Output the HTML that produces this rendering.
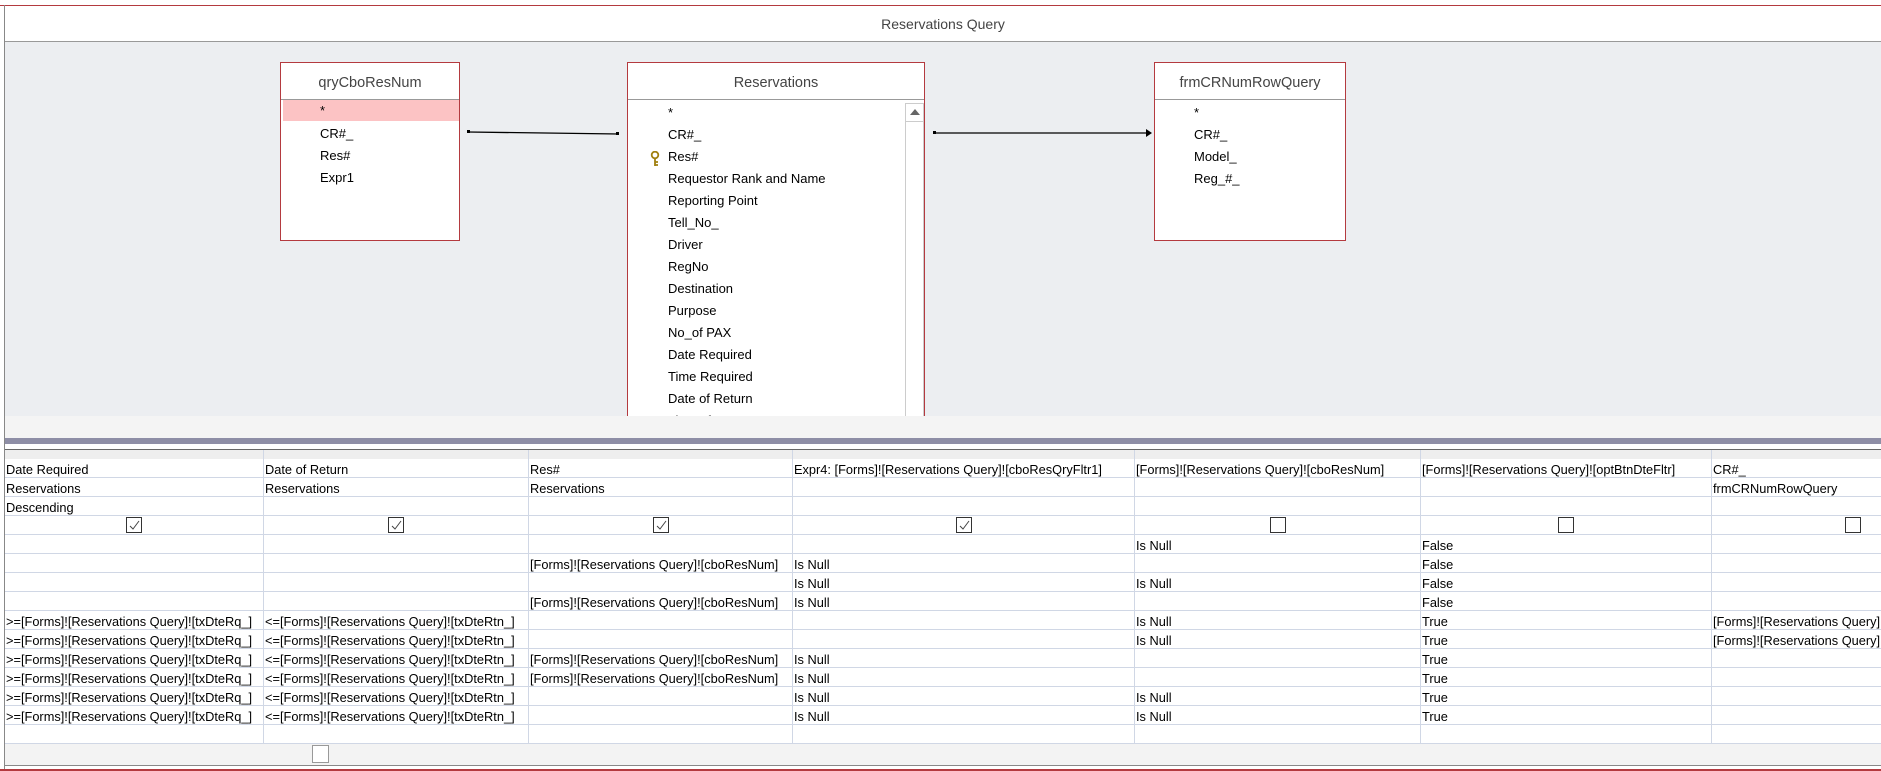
<!DOCTYPE html>
<html><head><style>
*{margin:0;padding:0;box-sizing:border-box}
body{width:1881px;height:771px;overflow:hidden;background:#fff;font-family:"Liberation Sans",sans-serif;font-size:13px;color:#000;position:relative}
.a{position:absolute}
.box{position:absolute;background:#fff;border:1px solid #b43a3f;overflow:hidden}
.box .t{position:absolute;left:0;right:0;top:0;height:37px;border-bottom:1px solid #999;text-align:center;line-height:40px;font-size:14.5px;color:#444}
.it{position:absolute;white-space:nowrap}
.c{position:absolute;white-space:nowrap;overflow:hidden;font-size:12.8px;line-height:19px;padding-left:1px;top:1px}
.cb{position:absolute;width:16px;height:16px;border:1px solid #333;background:#fff}
.cb svg{position:absolute;left:2px;top:2px}
</style></head><body>
<div class="a" style="left:0;top:5px;width:1881px;height:1px;background:#b43a3f"></div>
<div class="a" style="left:4px;top:5px;width:1px;height:766px;background:#888"></div>
<div class="a" style="left:5px;top:6px;width:1876px;height:36px;background:#fff;text-align:center;line-height:36px;font-size:14px;color:#444">Reservations Query</div>
<div class="a" style="left:5px;top:41px;width:1876px;height:1px;background:#999"></div>
<div class="a" style="left:5px;top:42px;width:1876px;height:374px;background:#eceef1"></div>
<div class="a" style="left:5px;top:416px;width:1876px;height:22px;background:#f4f4f4"></div>
<div class="a" style="left:5px;top:438px;width:1876px;height:6px;background:#8e8ea6"></div>
<div class="a" style="left:5px;top:449px;width:1876px;height:1px;background:#666"></div>
<div class="a" style="left:5px;top:450px;width:1876px;height:9px;background:#eee"></div>

<div class="box" style="left:280px;top:62px;width:180px;height:179px">
<div class="t">qryCboResNum</div>
<div class="a" style="left:2px;top:37px;width:176px;height:21px;background:#fcc3c4"></div>
<div class="it" style="left:39px;top:40px">*</div>
<div class="it" style="left:39px;top:63px">CR#_</div>
<div class="it" style="left:39px;top:85px">Res#</div>
<div class="it" style="left:39px;top:107px">Expr1</div>
</div>

<div class="box" style="left:627px;top:62px;width:298px;height:360px;border-bottom:none">
<div class="t">Reservations</div>
<div class="a" style="left:277px;top:40px;width:19px;height:330px;border:1px solid #ccc;background:#fff"></div>
<div class="a" style="left:277px;top:40px;width:19px;height:19px;border:1px solid #ccc"></div>
<div class="a" style="left:282px;top:46px;width:0;height:0;border-left:5px solid transparent;border-right:5px solid transparent;border-bottom:6px solid #666"></div>
<div class="it" style="left:40px;top:42px">*</div>
<div class="it" style="left:40px;top:64px">CR#_</div>
<svg class="a" style="left:22px;top:88px" width="10" height="16"><circle cx="5" cy="4" r="3.3" fill="none" stroke="#a08010" stroke-width="1.8"/><path d="M5 7v8M5 11h3M5 14h3" stroke="#a08010" stroke-width="1.8"/></svg>
<div class="it" style="left:40px;top:86px">Res#</div>
<div class="it" style="left:40px;top:108px">Requestor Rank and Name</div>
<div class="it" style="left:40px;top:130px">Reporting Point</div>
<div class="it" style="left:40px;top:152px">Tell_No_</div>
<div class="it" style="left:40px;top:174px">Driver</div>
<div class="it" style="left:40px;top:196px">RegNo</div>
<div class="it" style="left:40px;top:218px">Destination</div>
<div class="it" style="left:40px;top:240px">Purpose</div>
<div class="it" style="left:40px;top:262px">No_of PAX</div>
<div class="it" style="left:40px;top:284px">Date Required</div>
<div class="it" style="left:40px;top:306px">Time Required</div>
<div class="it" style="left:40px;top:328px">Date of Return</div>
<div class="it" style="left:40px;top:350px">Time of Return</div>
</div>
<div class="a" style="left:627px;top:416px;width:300px;height:22px;background:#f4f4f4"></div>

<div class="box" style="left:1154px;top:62px;width:192px;height:179px">
<div class="t">frmCRNumRowQuery</div>
<div class="it" style="left:39px;top:42px">*</div>
<div class="it" style="left:39px;top:64px">CR#_</div>
<div class="it" style="left:39px;top:86px">Model_</div>
<div class="it" style="left:39px;top:108px">Reg_#_</div>
</div>

<svg class="a" style="left:0;top:0" width="1881" height="300">
<path d="M468 132L619 134" stroke="#000" stroke-width="1.3"/>
<rect x="467" y="130" width="3" height="3" fill="#000"/><rect x="616" y="132" width="3" height="3" fill="#000"/>
<path d="M934 133L1148 133" stroke="#000" stroke-width="1.3"/>
<rect x="933" y="131" width="3" height="3" fill="#000"/>
<path d="M1146 129L1152 133L1146 137Z" fill="#000"/>
</svg>

<div id="g"></div>
<div class="a" style="left:5px;top:744px;width:1876px;height:21px;background:#f3f3f3"></div>
<div class="cb" style="left:312px;top:745px;width:17px;height:18px;border-color:#999"></div>
<div class="a" style="left:5px;top:765px;width:1876px;height:1px;background:#888"></div>
<div class="a" style="left:0;top:769px;width:1881px;height:2px;background:#b43a3f"></div>
<script>
var cols=[5,264,529,793,1135,1421,1712,1881];
var data=[
["Date Required","Date of Return","Res#","Expr4: [Forms]![Reservations Query]![cboResQryFltr1]","[Forms]![Reservations Query]![cboResNum]","[Forms]![Reservations Query]![optBtnDteFltr]","CR#_"],
["Reservations","Reservations","Reservations","","","","frmCRNumRowQuery"],
["Descending","","","","","",""],
["#1","#1","#1","#1","#0","#0","#0"],
["","","","","Is Null","False",""],
["","","[Forms]![Reservations Query]![cboResNum]","Is Null","","False",""],
["","","","Is Null","Is Null","False",""],
["","","[Forms]![Reservations Query]![cboResNum]","Is Null","","False",""]];
var A=">=[Forms]![Reservations Query]![txDteRq_]",B="<=[Forms]![Reservations Query]![txDteRtn_]",F="[Forms]![Reservations Query]![cboResNum]",C="[Forms]![Reservations Query]![txCRNum]";
data.push([A,B,"","","Is Null","True",C],[A,B,"","","Is Null","True",C],[A,B,F,"Is Null","","True",""],[A,B,F,"Is Null","","True",""],[A,B,"","Is Null","Is Null","True",""],[A,B,"","Is Null","Is Null","True",""],["","","","","","",""]);
var h="";
for(var r=0;r<data.length;r++){var y=459+r*19;
h+='<div class="a" style="left:5px;top:'+(y+18)+'px;width:1876px;height:1px;background:#d0d7e5"></div>';
for(var c=0;c<7;c++){var x=cols[c],w=cols[c+1]-x-1,v=data[r][c];
if(v[0]=="#"){var cx=(c==6)?1845:x+Math.round(w/2)-8;h+='<div class="cb" style="left:'+cx+'px;top:'+(y+1)+'px">'+(v=="#1"?'<svg width="11" height="11"><path d="M1 6L4 9L10 1" fill="none" stroke="#444" stroke-width="1"/></svg>':'')+'</div>';}
else h+='<div class="c" style="left:'+x+'px;top:'+(y+1)+'px;width:'+w+'px">'+v.replace(/</g,"&lt;")+'</div>';}}
for(var c=1;c<7;c++)h+='<div class="a" style="left:'+(cols[c]-1)+'px;top:450px;width:1px;height:294px;background:#d0d7e5"></div>';
document.getElementById("g").innerHTML=h;
</script>
</body></html>
